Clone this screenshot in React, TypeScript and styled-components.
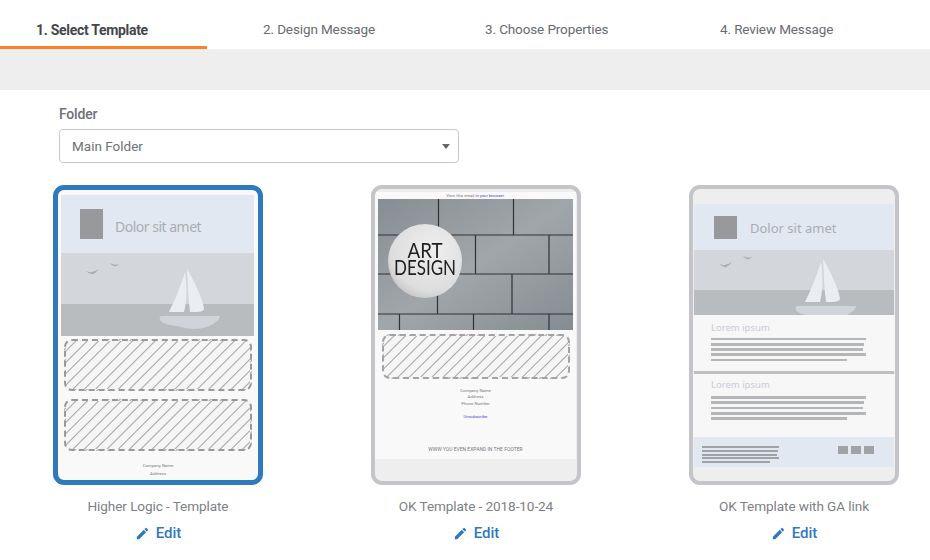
import styled, { createGlobalStyle } from 'styled-components'
import { MdEdit } from 'react-icons/md'

const GlobalStyle = createGlobalStyle`
	html, body {
		margin: 0;
		padding: 0;
		background: #fff;
		font-family: Roboto, "Liberation Sans", sans-serif;
	}
	* {
		box-sizing: border-box;
	}
`

const Page = styled.div`
	width: 930px;
	height: 560px;
	overflow: hidden;
`

const Tabs = styled.div`
	display: flex;
	height: 49px;
`

const Tab = styled.div<{ $width: number; $left: number; $active?: boolean }>`
	width: ${(p) => p.$width}px;
	padding-left: ${(p) => p.$left}px;
	padding-top: ${(p) => (p.$active ? 21 : 20)}px;
	font-size: ${(p) => (p.$active ? '14px' : '13.5px')};
	line-height: 18px;
	letter-spacing: ${(p) => (p.$active ? '-0.3px' : '-0.12px')};
	font-weight: ${(p) => (p.$active ? 700 : 400)};
	color: ${(p) => (p.$active ? '#43464c' : '#686b71')};
	border-bottom: 3px solid ${(p) => (p.$active ? '#fd8125' : 'transparent')};
`

const Band = styled.div`
	height: 41px;
	background: #eeeeee;
`

const FolderBlock = styled.div`
	padding: 15px 0 0 59px;
`

const FolderLabel = styled.div`
	font-size: 14px;
	line-height: 18px;
	font-weight: 500;
	letter-spacing: -0.2px;
	color: #6e7177;
	margin-bottom: 6px;
`

const Select = styled.div`
	position: relative;
	width: 400px;
	height: 34px;
	border: 1px solid #c8c8c8;
	border-radius: 4px;
	padding: 7px 12px;
	font-size: 13.5px;
	line-height: 18px;
	color: #6e7177;

	&::after {
		content: '';
		position: absolute;
		right: 8px;
		top: 14px;
		border-left: 4.5px solid transparent;
		border-right: 4.5px solid transparent;
		border-top: 5px solid #666;
	}
`

const Templates = styled.div`
	display: grid;
	grid-template-columns: repeat(3, 210px);
	column-gap: 108px;
	padding: 22px 0 0 53px;
`

const Item = styled.div`
	display: flex;
	flex-direction: column;
	align-items: center;
`

const Thumb = styled.div<{ $selected?: boolean; $bg: string }>`
	width: 210px;
	height: 300px;
	border: ${(p) => (p.$selected ? '5px solid #2f79bd' : '4px solid #c5c5c9')};
	border-radius: 11px;
	background: ${(p) => p.$bg};
	overflow: hidden;
	display: flex;
	flex-direction: column;
`

const ItemName = styled.div`
	margin-top: 12px;
	font-size: 13.6px;
	line-height: 18px;
	letter-spacing: -0.1px;
	color: #7d8086;
`

const EditLink = styled.a`
	display: flex;
	align-items: center;
	gap: 6px;
	margin-top: 9px;
	font-size: 15px;
	line-height: 18px;
	font-weight: 500;
	color: #2f79bd;

	svg {
		width: 15px;
		height: 15px;
	}
`

const BlueHeader = styled.div<{ $height: number; $margin: string; $pad: number; $gap: number }>`
	display: flex;
	align-items: center;
	gap: ${(p) => p.$gap}px;
	height: ${(p) => p.$height}px;
	margin: ${(p) => p.$margin};
	padding-left: ${(p) => p.$pad}px;
	background: #e1e8f2;
	flex-shrink: 0;
`

const LogoBox = styled.div<{ $width: number; $height: number }>`
	width: ${(p) => p.$width}px;
	height: ${(p) => p.$height}px;
	background: #97999b;
`

const DolorText = styled.div<{ $size: number; $spacing: number; $top: number }>`
	font-family: "Noto Sans", sans-serif;
	font-size: ${(p) => p.$size}px;
	letter-spacing: ${(p) => p.$spacing}px;
	margin-top: ${(p) => p.$top}px;
	color: #a9adb2;
`

const SceneSvg = styled.svg<{ $margin: string }>`
	display: block;
	flex-shrink: 0;
	margin: ${(p) => p.$margin};
`

const Hatch = styled.div<{ $height: number; $margin: string; $dash?: string }>`
	height: ${(p) => p.$height}px;
	margin: ${(p) => p.$margin};
	border: 2px dashed ${(p) => p.$dash || '#999'};
	border-radius: 8px;
	background: repeating-linear-gradient(
		135deg,
		#f5f5f5 0,
		#f5f5f5 6px,
		#b2b2b2 6.8px,
		#b2b2b2 7.2px,
		#f5f5f5 8px
	);
	flex-shrink: 0;
`

const Fine = styled.div<{ $color?: string; $top?: number; $size?: number; $line?: number }>`
	font-size: ${(p) => p.$size || 4.3}px;
	line-height: ${(p) => p.$line || 7.5}px;
	margin-top: ${(p) => p.$top || 0}px;
	text-align: center;
	color: ${(p) => p.$color || '#77797c'};
	flex-shrink: 0;
`

const Link = styled.span`
	color: #4a3fd8;
`

const Photo = styled.svg`
	display: block;
	flex-shrink: 0;
	margin-left: 3px;
	filter: blur(0.35px);
`

const Panel = styled.div<{ $height: number; $bg: string }>`
	height: ${(p) => p.$height}px;
	background: ${(p) => p.$bg};
	flex-shrink: 0;
	display: flex;
	flex-direction: column;
`

const EmailBody = styled(Panel)`
	margin: 3px 1px 0 0;
`

const Lorem = styled.div<{ $top: number; $bottom: number }>`
	font-family: "Noto Sans", sans-serif;
	font-size: 9.5px;
	line-height: 12px;
	color: #c9ccd6;
	margin: ${(p) => p.$top}px 0 ${(p) => p.$bottom}px 18px;
`

const Lines = styled.div<{ $gap: number; $left: number }>`
	display: flex;
	flex-direction: column;
	gap: ${(p) => p.$gap}px;
	margin-left: ${(p) => p.$left}px;
`

const Line = styled.div<{ $width: number; $color: string; $thick: number }>`
	width: ${(p) => p.$width}px;
	height: ${(p) => p.$thick}px;
	background: ${(p) => p.$color};
`

const Divider = styled.div`
	height: 3px;
	margin: 0 1px;
	background: #bdbfc1;
	flex-shrink: 0;
`

const FooterBlue = styled.div`
	display: flex;
	justify-content: space-between;
	align-items: flex-start;
	height: 30px;
	margin: 0 1px;
	padding: 9px 20px 0 8px;
	background: #e1e8f2;
	flex-shrink: 0;
`

const Squares = styled.div`
	display: flex;
	gap: 3px;
`

const Square = styled.div`
	width: 10px;
	height: 8px;
	background: #a0a4a8;
`

type SceneProps = {
	width: number
	height: number
	horizon: number
	boatX: number
	boatY: number
	birdY: number
	margin: string
}

const Scene = ({ width, height, horizon, boatX, boatY, birdY, margin }: SceneProps) => (
	<SceneSvg $margin={margin} width={width} height={height} viewBox={`0 0 ${width} ${height}`}>
		<rect width={width} height={horizon} fill="#d3d6da" />
		<rect y={horizon} width={width} height={height - horizon} fill="#b8bcbf" />
		<path
			d={`M${25} ${birdY + 2}q6 3 13 -2q-5 6 -7 5q-3 0 -6 -3zM${49} ${birdY - 6}q5 3 9 1q-3 3 -5 2q-2 0 -4 -3z`}
			fill="#a8abb0"
		/>
		<g transform={`translate(${boatX} ${boatY})`}>
			<path d="M25 0C20 16 14 30 9 40H24C27 28 27 14 25 0Z" fill="#eaeef2" />
			<path d="M27 -3C35 10 42 26 44 36C44 40 40 40 30 40C28 26 28 12 27 -3Z" fill="#eaeef2" />
			<path
				d="M2 44H58Q62 44 58 48C52 54 44 57 34 57C26 57 20 54 10 53C4 52 -2 49 0 45Q0 44 2 44Z"
				fill="#d0d4d8"
			/>
		</g>
	</SceneSvg>
)

const ArtPhoto = () => (
	<Photo width={195} height={131} viewBox="0 0 195 131">
		<defs>
			<linearGradient id="wall" x1="0" y1="0" x2="1" y2="1">
				<stop offset="0" stopColor="#878e93" />
				<stop offset="0.5" stopColor="#a0a6a9" />
				<stop offset="1" stopColor="#858c91" />
			</linearGradient>
			<radialGradient id="disc" cx="0.6" cy="0.35" r="0.8">
				<stop offset="0" stopColor="#eeefee" />
				<stop offset="0.7" stopColor="#dcdddc" />
				<stop offset="1" stopColor="#b4b6b5" />
			</radialGradient>
		</defs>
		<rect width={195} height={131} fill="url(#wall)" />
		<path
			d="M0 36H195M0 75H195M0 115H195M60.5 0V36M135.5 0V36M97.5 36V75M171 36V75M59.5 75V115M134 75V115M21.5 115V131M95.5 115V131M171 115V131"
			stroke="#2e3338"
			strokeWidth="1.2"
			fill="none"
		/>
		<circle cx={47} cy={62} r={37} fill="url(#disc)" />
		<text
			x={47}
			y={58.5}
			textAnchor="middle"
			fontFamily="Lato, sans-serif"
			fontSize="21.5"
			fill="#1c1e20"
			textLength={35}
			lengthAdjust="spacingAndGlyphs"
		>
			ART
		</text>
		<text
			x={47}
			y={76}
			textAnchor="middle"
			fontFamily="Lato, sans-serif"
			fontSize="21.5"
			fill="#1c1e20"
			textLength={62}
			lengthAdjust="spacingAndGlyphs"
		>
			DESIGN
		</text>
	</Photo>
)

const bodyLines = [155, 153, 152, 155, 136]
const footerLines = [77, 76, 75, 77, 68]

const App = () => {
	return (
		<Page>
			<GlobalStyle />
			<Tabs>
				<Tab $width={207} $left={36} $active>
					1. Select Template
				</Tab>
				<Tab $width={222} $left={56}>
					2. Design Message
				</Tab>
				<Tab $width={235} $left={56}>
					3. Choose Properties
				</Tab>
				<Tab $width={266} $left={56}>
					4. Review Message
				</Tab>
			</Tabs>
			<Band />
			<FolderBlock>
				<FolderLabel>Folder</FolderLabel>
				<Select>Main Folder</Select>
			</FolderBlock>
			<Templates>
				<Item>
					<Thumb $selected $bg="#f9f9f9">
						<BlueHeader $height={58} $margin="5px 4px 0 3px" $pad={19} $gap={12}>
							<LogoBox $width={23} $height={30} />
							<DolorText $size={14} $spacing={-0.5} $top={4}>
								Dolor sit amet
							</DolorText>
						</BlueHeader>
						<Scene
							width={193}
							height={83}
							horizon={51}
							boatX={99}
							boatY={19}
							birdY={16}
							margin="0 4px 0 3px"
						/>
						<Hatch $height={52} $margin="3px 6px 0 6px" />
						<Hatch $height={52} $margin="8px 6px 0 6px" />
						<Fine $top={11}>Company Name</Fine>
						<Fine>Address</Fine>
					</Thumb>
					<ItemName>Higher Logic - Template</ItemName>
					<EditLink>
						<MdEdit />
						Edit
					</EditLink>
				</Item>
				<Item>
					<Thumb $bg="#eeeeee">
						<EmailBody $height={267} $bg="#f9f9f9">
							<Fine $size={4.2} $line={7}>
								View this email <Link>in your browser.</Link>
							</Fine>
							<ArtPhoto />
							<Hatch $height={45} $margin="4px 6px 0 7px" $dash="#a3a3a3" />
							<Fine $top={8.5} $line={6.5}>
								Company Name
							</Fine>
							<Fine $line={6.5}>Address</Fine>
							<Fine $line={6.5}>Phone Number</Fine>
							<Fine $top={6.5} $line={6.5}>
								<Link>Unsubscribe</Link>
							</Fine>
							<Fine $top={26} $size={5} $line={6.5}>
								WWW YOU EVEN EXPAND IN THE FOOTER
							</Fine>
						</EmailBody>
					</Thumb>
					<ItemName>OK Template - 2018-10-24</ItemName>
					<EditLink>
						<MdEdit />
						Edit
					</EditLink>
				</Item>
				<Item>
					<Thumb $bg="#eeeeee">
						<BlueHeader $height={46} $margin="15px 1px 0 1px" $pad={20} $gap={13}>
							<LogoBox $width={23} $height={23} />
							<DolorText $size={13} $spacing={0} $top={1}>
								Dolor sit amet
							</DolorText>
						</BlueHeader>
						<Scene
							width={200}
							height={65}
							horizon={40}
							boatX={102}
							boatY={12}
							birdY={12}
							margin="0 0 0 1px"
						/>
						<Panel $height={56} $bg="#f7f7f7">
							<Lorem $top={7} $bottom={3.5}>
								Lorem ipsum
							</Lorem>
							<Lines $gap={2.5} $left={18}>
								{bodyLines.map((w, i) => (
									<Line key={i} $width={w} $color="#b5b6b8" $thick={2.8} />
								))}
							</Lines>
						</Panel>
						<Divider />
						<Panel $height={63} $bg="#f7f7f7">
							<Lorem $top={5} $bottom={5}>
								Lorem ipsum
							</Lorem>
							<Lines $gap={2.5} $left={18}>
								{bodyLines.map((w, i) => (
									<Line key={i} $width={w} $color="#b5b6b8" $thick={2.8} />
								))}
							</Lines>
						</Panel>
						<FooterBlue>
							<Lines $gap={1.8} $left={0}>
								{footerLines.map((w, i) => (
									<Line key={i} $width={w} $color="#a0a3a6" $thick={2} />
								))}
							</Lines>
							<Squares>
								<Square />
								<Square />
								<Square />
							</Squares>
						</FooterBlue>
					</Thumb>
					<ItemName>OK Template with GA link</ItemName>
					<EditLink>
						<MdEdit />
						Edit
					</EditLink>
				</Item>
			</Templates>
		</Page>
	)
}

export default App
